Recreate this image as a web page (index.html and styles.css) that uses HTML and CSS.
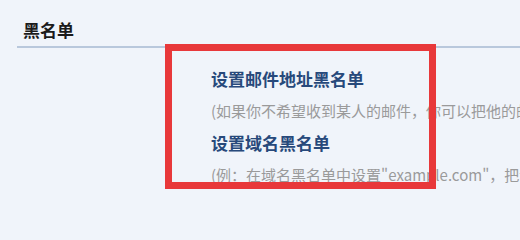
FILE: index.html
```html
<!DOCTYPE html>
<html lang="zh">
<head>
<meta charset="utf-8">
<title>黑名单</title>
<link rel="stylesheet" href="styles.css">
</head>
<body>
<div class="page">
  <div class="section-head"><h2 class="section-title">黑名单</h2></div>
  <ul class="opts">
    <li class="opt">
      <a class="opt-title">设置邮件地址黑名单</a>
      <p class="opt-desc">(如果你不希望收到某人的邮件，你可以把他的邮件地址加入黑名单)</p>
    </li>
    <li class="opt">
      <a class="opt-title">设置域名黑名单</a>
      <p class="opt-desc">(例：在域名黑名单中设置"example.com"，把该域名下所有邮件拒收)</p>
    </li>
  </ul>
  <div class="highlight"></div>
</div>
</body>
</html>
```
FILE: styles.css
```css
html, body {
  margin: 0;
  padding: 0;
  background: #f0f4fa;
  overflow: hidden;
}
.page {
  position: relative;
  width: 520px;
  height: 224px;
  overflow: hidden;
  font-family: "Noto Sans CJK SC", "Noto Sans", sans-serif;
}
.section-head {
  margin-left: 17px;
  padding: 18px 0 4px 6px;
  border-bottom: 2px solid #b9c8dc;
}
.section-title {
  margin: 0;
  font-size: 17px;
  line-height: 24px;
  font-weight: 700;
  color: #1b1b1b;
}
.opts {
  list-style: none;
  margin: 0;
  padding: 16px 0 0 211px;
}
.opt-title {
  display: block;
  font-size: 17px;
  line-height: 30px;
  font-weight: 700;
  color: #27497b;
  white-space: nowrap;
}
.opt-desc {
  margin: 0;
  font-size: 15px;
  line-height: 34px;
  color: #9a9a9a;
  white-space: nowrap;
}
.highlight {
  position: absolute;
  left: 165px;
  top: 44px;
  width: 271px;
  height: 145px;
  box-sizing: border-box;
  border: 7px solid #e8383a;
}
```
